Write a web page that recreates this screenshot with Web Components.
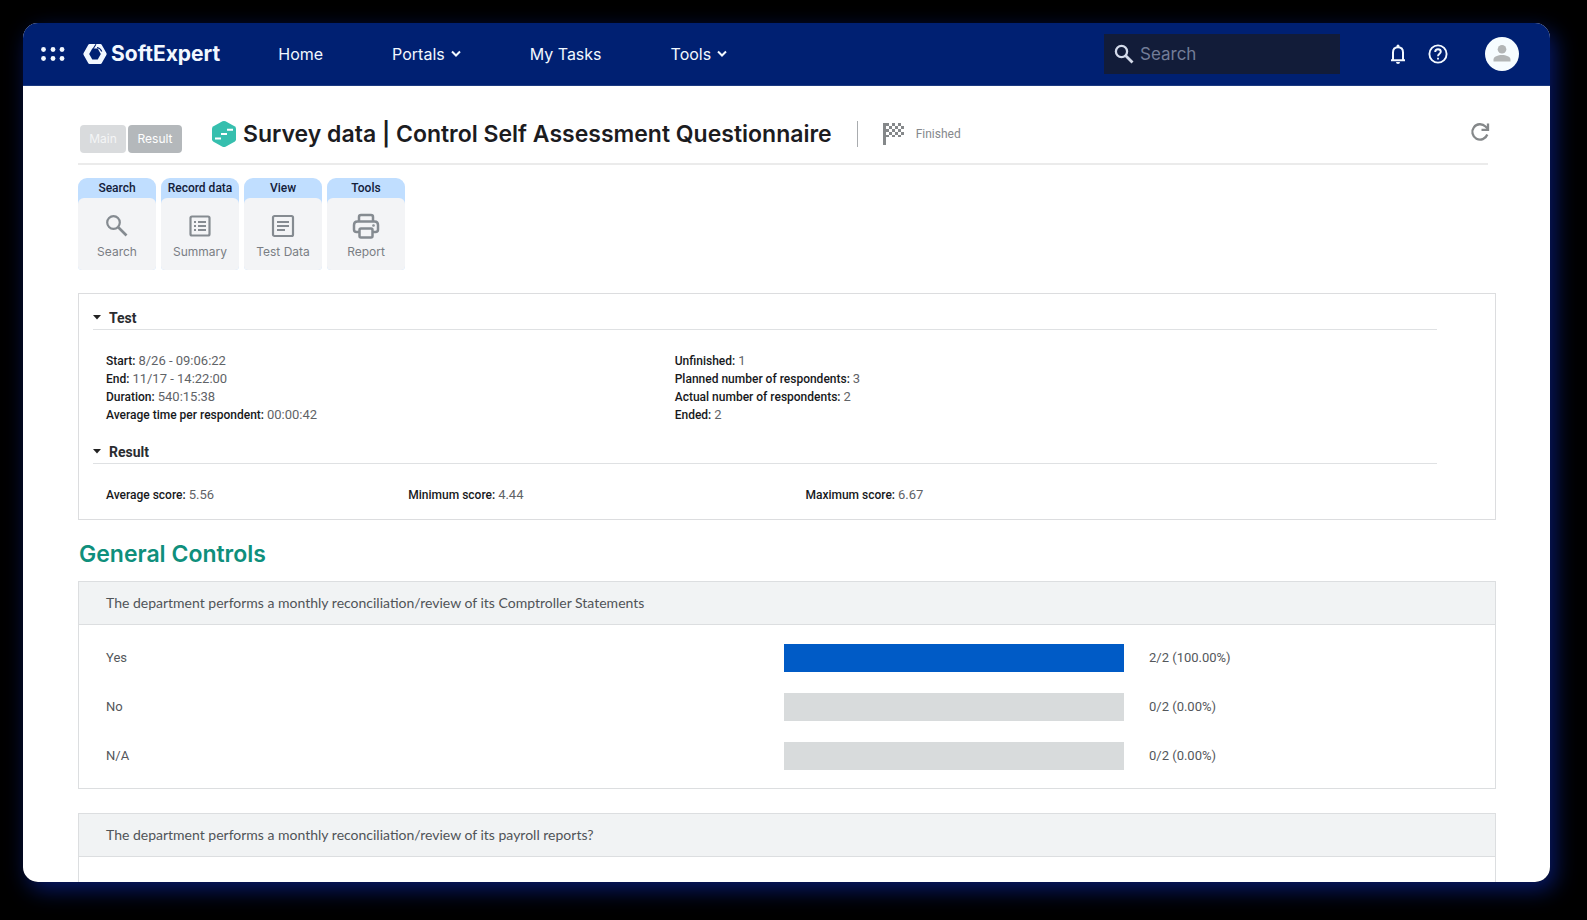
<!DOCTYPE html>
<html lang="en">
<head>
<meta charset="utf-8">
<meta name="viewport" content="width=device-width, initial-scale=1">
<title>SoftExpert - Survey data</title>
<style>
  html, body { margin: 0; background: #000; font-family: Roboto, sans-serif; font-size: 13px; color: #4a4d52; }
</style>
</head>
<body>
<se-window>
  <se-topbar slot="bar"></se-topbar>
  <se-page-title></se-page-title>
  <se-toolbar>
    <se-tool group="Search" label="Search"><svg width="24" height="24" viewBox="0 0 24 24" fill="none" stroke="#858b91" stroke-width="2.200"><circle cx="8.500" cy="8.500" r="6.300"/><path d="M13 13 21.500 21.500" stroke-width="2.700"/></svg></se-tool>
    <se-tool group="Record data" label="Summary"><svg width="24" height="24" viewBox="0 0 24 24" fill="none" stroke="#858b91" stroke-width="2.200"><rect x="2.500" y="2.500" width="19" height="19" rx="1.500"/><path d="M6 8h2M10 8h8M6 12h2M10 12h8M6 16h2M10 16h8"/></svg></se-tool>
    <se-tool group="View" label="Test Data"><svg width="24" height="24" viewBox="0 0 24 24" fill="none" stroke="#858b91" stroke-width="2.200"><rect x="2" y="2" width="20" height="20" rx="1.500"/><path d="M6 8h12M6 12h12M6 16h8"/></svg></se-tool>
    <se-tool group="Tools" label="Report"><svg width="28" height="26" viewBox="0 0 28 26" fill="none" stroke="#858b91" stroke-width="2.500" stroke-linejoin="round"><path d="M7 8V4Q7 2 9 2H19Q21 2 21 4V8"/><path d="M7 19H4.500Q2 19 2 16.500V12Q2 8.500 5.500 8.500H22.500Q26 8.500 26 12V16.500Q26 19 23.500 19H21"/><rect x="7.500" y="15.500" width="13" height="9" rx="1.500"/><circle cx="21.500" cy="12.500" r=".6" stroke-width="1.500"/></svg></se-tool>
  </se-toolbar>
  <se-summary></se-summary>
  <se-heading>General Controls</se-heading>
  <se-question answers='[["Yes","2/2 (100.00%)",100],["No","0/2 (0.00%)",0],["N/A","0/2 (0.00%)",0]]'>The department performs a monthly reconciliation/review of its Comptroller Statements</se-question>
  <se-question answers='[]'>The department performs a monthly reconciliation/review of its payroll reports?</se-question>
</se-window>

<script>
const define = (name, markup, ready) => {
  const template = document.createElement('template');
  template.innerHTML = markup;
  customElements.define(name, class extends HTMLElement {
    connectedCallback() {
      if (this.shadowRoot) return;
      const root = this.attachShadow({ mode: 'open' });
      root.append(template.content.cloneNode(true));
      if (ready) ready(this, root);
    }
  });
};

define('se-window', `
<style>
  :host { display: block; box-sizing: border-box; height: 100vh; padding: 23px 37px 38px 23px; overflow: hidden; }
  .frame { display: flex; flex-direction: column; height: 100%; border-radius: 15px; overflow: hidden; background: #fff; }
  .glow { height: 100%; border-radius: 15px; box-shadow: 5px 8px 22px 0 #07196a; }
  main { flex: 1; min-height: 0; overflow: hidden; padding: 32px 54px 0 55px; }
</style>
<div class="glow"><div class="frame"><slot name="bar"></slot><main><slot></slot></main></div></div>`);

define('se-topbar', `
<style>
  :host { display: block; background: #002072; color: #f2f8ff; font-family: Inter, sans-serif; }
  header { display: flex; align-items: center; height: 63px; box-sizing: border-box; padding: 0 31px 1px 18px; border-bottom: 1px solid #1c3a80; }
  button { display: flex; padding: 0; border: 0; background: none; color: inherit; cursor: pointer; }
  svg { display: block; }
  a { color: inherit; text-decoration: none; }
  .logo { display: flex; align-items: center; gap: 4px; margin-left: 18px; font: 700 21px/24px Inter, sans-serif; }
  nav { display: flex; gap: 69px; margin-left: 58px; font-size: 16px; line-height: 24px; }
  nav a { display: flex; align-items: center; gap: 6px; }
  label { display: flex; align-items: center; gap: 6px; width: 236px; height: 40px; box-sizing: border-box; padding: 0 10px; margin-left: auto; background: #121c39; color: #d3daea; }
  input { flex: 1; min-width: 0; padding: 0; border: 0; outline: 0; background: none; color: #fff; font: 17px/24px Inter, sans-serif; }
  input::placeholder { color: #737c98; opacity: 1; }
  .actions { display: flex; align-items: center; gap: 20px; margin-left: 48px; }
  .avatar { margin-left: 17px; }
</style>
<header>
  <button aria-label="Applications"><svg width="24" height="20" viewBox="0 0 24 20" fill="currentColor"><circle cx="2.500" cy="5.500" r="2.400"/><circle cx="12" cy="5.500" r="2.400"/><circle cx="21" cy="5.500" r="2.400"/><circle cx="2.500" cy="14.500" r="2.400"/><circle cx="12" cy="14.500" r="2.400"/><circle cx="21" cy="14.500" r="2.400"/></svg></button>
  <a class="logo" href="#"><svg width="24" height="22" viewBox="0 0 24 22"><path d="M6.500 1h11Q18.300 1 18.700 1.800L23.500 10.300Q23.800 11 23.500 11.700L18.700 20.200Q18.300 21 17.500 21h-11Q5.700 21 5.300 20.200L.5 11.700Q.2 11 .5 10.300L5.300 1.800Q5.700 1 6.500 1Z" fill="#f2f8ff"/><path d="M9.300 5.500H14.700L17.800 11 14.700 16.500H9.300L6.200 11Z" fill="#002072"/><path d="M10 6 13 1.300M14 4.500Q17.500 5.200 18.800 8.500" fill="none" stroke="#002072" stroke-width="1.100"/></svg><span>SoftExpert</span></a>
  <nav>
    <a href="#">Home</a>
    <a href="#">Portals<svg width="10" height="8" viewBox="0 0 10 8" fill="none" stroke="currentColor" stroke-width="2"><path d="M1 1.500 5 5.500 9 1.500"/></svg></a>
    <a href="#">My Tasks</a>
    <a href="#">Tools<svg width="10" height="8" viewBox="0 0 10 8" fill="none" stroke="currentColor" stroke-width="2"><path d="M1 1.500 5 5.500 9 1.500"/></svg></a>
  </nav>
  <label><svg width="20" height="20" viewBox="0 0 20 20" fill="none" stroke="currentColor"><circle cx="7.500" cy="7.500" r="5.600" stroke-width="2.300"/><path d="M11.500 11.500 18.500 18.500" stroke-width="2.800"/></svg><input type="text" placeholder="Search" aria-label="Search"></label>
  <div class="actions">
    <button aria-label="Notifications"><svg width="20" height="20" viewBox="0 0 20 20"><path d="M5 16V8.500Q5 3.300 10 3.300T15 8.500V16M3 16.200H17" fill="none" stroke="currentColor" stroke-width="2"/><path d="M8.500 3.500V2a1.500 1.500 0 0 1 3 0V3.500ZM8 18h4a2 2 0 0 1-4 0Z" fill="currentColor"/></svg></button>
    <button aria-label="Help"><svg width="20" height="20" viewBox="0 0 20 20" fill="none" stroke="currentColor" stroke-width="1.900"><circle cx="10" cy="10" r="8.600"/><path d="M7.200 8Q7.200 5.300 10 5.300T12.800 7.800C12.800 9.700 10 9.700 10 12.200"/><path d="M10 13.700V15.600"/></svg></button>
    <button class="avatar" aria-label="Profile"><svg width="34" height="34" viewBox="0 0 34 34"><circle cx="17" cy="17" r="17" fill="#f6fcff"/><circle cx="17" cy="12.300" r="4.300" fill="#b2b5b6"/><path d="M8.500 24.500V22.500C8.500 19.500 13 18 17 18S25.500 19.500 25.500 22.500V24.500Z" fill="#b2b5b6"/></svg></button>
  </div>
</header>`);

define('se-page-title', `
<style>
  :host { display: block; margin-right: 8px; border-bottom: 2px solid #ebebeb; }
  .row { display: flex; align-items: center; box-sizing: border-box; height: 45px; padding: 0 0 14px 2px; }
  .tabs { display: flex; gap: 2px; margin-top: 10px; }
  .tabs button { height: 28px; padding: 0; width: 46px; border: 0; border-radius: 4px; background: #d9dbdd; color: #f4f5f6; font: 12px/16px Inter, sans-serif; cursor: pointer; }
  .tabs .on { width: 54px; background: #b4b8bb; color: #fff; }
  .hex { margin: 0 6px 0 29px; }
  h1 { margin: 0; font: 600 23px/30px Inter, sans-serif; color: #1c1c1f; white-space: nowrap; }
  .status { display: flex; align-items: center; gap: 12px; height: 26px; margin-left: 25px; padding-left: 25px; border-left: 1px solid #a9acaf; font-size: 12px; color: #85888c; }
  .refresh { margin: 0 -2px 4px auto; padding: 0; border: 0; background: none; cursor: pointer; }
  svg { display: block; flex: none; }
</style>
<div class="row">
  <div class="tabs"><button>Main</button><button class="on">Result</button></div>
  <svg class="hex" width="26" height="28" viewBox="0 0 26 28"><path d="M11.500 1.300Q13 .5 14.500 1.300L23.500 6.300Q25 7.200 25 8.800V19.200Q25 20.800 23.500 21.700L14.500 26.700Q13 27.500 11.500 26.700L2.500 21.700Q1 20.800 1 19.200V8.800Q1 7.200 2.500 6.300Z" fill="#36bfae"/><path d="M4 18.500H10M10 14H16M16 9.800H22" stroke="#fff" stroke-width="2"/></svg>
  <h1>Survey data | Control Self Assessment Questionnaire</h1>
  <div class="status"><svg width="21" height="24" viewBox="0 0 21 24" fill="#85888a"><path d="M0 1h3v22H0z"/><path d="M3 1h3v3H3zM9 1h3v3H9zM15 1h3v3h-3zM6 4h3v3H6zM12 4h3v3h-3zM18 4h3v3h-3zM3 7h3v3H3zM9 7h3v3H9zM15 7h3v3h-3zM6 10h3v3H6zM12 10h3v3h-3zM18 10h3v3h-3zM3 13h3v2H3zM9 13h3v2H9zM15 13h3v2h-3z"/></svg><span>Finished</span></div>
  <button class="refresh" aria-label="Refresh"><svg width="20" height="20" viewBox="0 0 20 20" fill="none" stroke="#85888a" stroke-width="2.300"><path d="M17.300 12.500A7.700 7.700 0 1 1 15.500 4.500L18 7"/><path d="M18 1.500V7.800H11.500" /></svg></button>
</div>`);

define('se-toolbar', `
<style>:host { display: flex; gap: 5px; padding-top: 13px; }</style><slot></slot>`);

define('se-tool', `
<style>
  :host { display: block; width: 78px; }
  button { display: block; width: 100%; padding: 0; border: 0; border-radius: 9px 9px 4px 4px; background: #c0deff; color: #7a7e84; cursor: pointer; }
  .group { display: block; font: 500 12px/20px Roboto, sans-serif; color: #13203a; }
  .body { display: flex; flex-direction: column; align-items: center; justify-content: space-between; box-sizing: border-box; height: 72px; padding: 14px 0 10px; border-radius: 6px 6px 4px 4px; background: #f3f4f6; }
  .icon { display: grid; place-items: center; height: 28px; }
  .label { font: 12px/16px Inter, sans-serif; }
</style>
<button><span class="group"></span><span class="body"><span class="icon"><slot></slot></span><span class="label"></span></span></button>`,
(host, root) => {
  root.querySelector('.group').textContent = host.getAttribute('group');
  root.querySelector('.label').textContent = host.getAttribute('label');
});

define('se-summary', `
<style>
  :host { display: block; margin-top: 23px; padding: 12px 58px 15px 14px; border: 1px solid #dcdddf; }
  h2 { margin: 0; padding-bottom: 0; border-bottom: 1px solid #dfe1e3; }
  h2 button { display: flex; align-items: center; gap: 8px; height: 23px; padding: 0; border: 0; background: none; color: #2a2c30; font: 700 14px/20px Roboto, sans-serif; cursor: pointer; }
  svg { display: block; }
  dl { display: grid; margin: 0; padding-left: 13px; }
  dl div { display: flex; align-items: baseline; gap: 3px; white-space: nowrap; }
  dt { font: 500 12px/17px Roboto, sans-serif; color: #17191c; }
  dd { margin: 0; font: 13px/17px Roboto, sans-serif; color: #5f6367; }
  .test { grid-template: repeat(4, auto) / 570fr 764fr; grid-auto-flow: column; padding-top: 22px; padding-bottom: 16px; }
  .result { grid-template-columns: 303fr 398fr 633fr; padding-top: 22px; }
</style>
<h2><button aria-expanded="true"><svg width="8" height="5" viewBox="0 0 8 5"><path d="M0 0H8L4 4.500Z" fill="#222"/></svg>Test</button></h2>
<dl class="test">
  <div><dt>Start:</dt><dd>8/26 - 09:06:22</dd></div>
  <div><dt>End:</dt><dd>11/17 - 14:22:00</dd></div>
  <div><dt>Duration:</dt><dd>540:15:38</dd></div>
  <div><dt>Average time per respondent:</dt><dd>00:00:42</dd></div>
  <div><dt>Unfinished:</dt><dd>1</dd></div>
  <div><dt>Planned number of respondents:</dt><dd>3</dd></div>
  <div><dt>Actual number of respondents:</dt><dd>2</dd></div>
  <div><dt>Ended:</dt><dd>2</dd></div>
</dl>
<h2><button aria-expanded="true"><svg width="8" height="5" viewBox="0 0 8 5"><path d="M0 0H8L4 4.500Z" fill="#222"/></svg>Result</button></h2>
<dl class="result">
  <div><dt>Average score:</dt><dd>5.56</dd></div>
  <div><dt>Minimum score:</dt><dd>4.44</dd></div>
  <div><dt>Maximum score:</dt><dd>6.67</dd></div>
</dl>`);

define('se-heading', `
<style>
  :host { display: block; padding: 18px 0 11px 1px; }
  h2 { margin: 0; font: 600 23px/32px Inter, sans-serif; color: #0f8f7c; }
</style>
<h2><slot></slot></h2>`);

define('se-question', `
<style>
  :host { display: block; box-sizing: border-box; min-height: 208px; margin-bottom: 24px; border: 1px solid #dcdee0; }
  h3 { margin: 0; padding: 11px 27px; border-bottom: 1px solid #dcdee0; background: #f1f3f4; font: 400 14px/20px Lato, sans-serif; color: #505458; }
  table { width: 100%; border-collapse: collapse; table-layout: fixed; margin: 8px 0; font: 13px/16px Roboto, sans-serif; color: #54575b; }
  th, td { height: 49px; padding: 0; text-align: left; font-weight: 400; }
  th { width: 49.8%; box-sizing: border-box; padding-left: 27px; }
  .bar { width: 24%; }
  .track { height: 28px; background: #d8dbdc; }
  .fill { height: 100%; background: #005bc6; }
  .count { padding-left: 25px; }
</style>
<h3><slot></slot></h3>
<table><tbody></tbody></table>`,
(host, root) => {
  const body = root.querySelector('tbody');
  for (const [name, count, share] of JSON.parse(host.getAttribute('answers'))) {
    const row = body.insertRow();
    row.innerHTML = '<th scope="row"></th><td class="bar"><div class="track"><div class="fill"></div></div></td><td class="count"></td>';
    row.querySelector('th').textContent = name;
    row.querySelector('.fill').style.width = share + '%';
    row.querySelector('.count').textContent = count;
  }
});
</script>
</body>
</html>
